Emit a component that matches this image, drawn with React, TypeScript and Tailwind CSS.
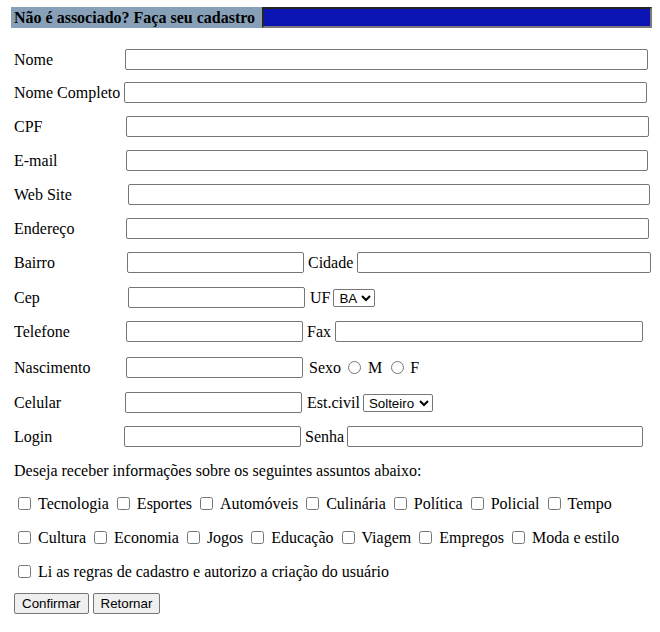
import React from "react";

const serif = "font-['Liberation_Serif','Times_New_Roman',serif]";
const sans = "font-['Liberation_Sans',Arial,sans-serif]";

const inputCls = "shrink-0 h-[21px] border border-[#767676] rounded-[2px] bg-white px-[2px] text-[13px] outline-none";

const fullRows = [
  { label: "Nome", labelW: "w-[111px]", inputW: "w-[523px]", mt: "mt-[21px]" },
  { label: "Nome Completo", labelW: "w-[110px]", inputW: "w-[523px]", mt: "mt-[12px]" },
  { label: "CPF", labelW: "w-[112px]", inputW: "w-[523px]", mt: "mt-[13px]" },
  { label: "E-mail", labelW: "w-[112px]", inputW: "w-[522px]", mt: "mt-[13px]" },
  { label: "Web Site", labelW: "w-[114px]", inputW: "w-[522px]", mt: "mt-[13px]" },
  { label: "Endereço", labelW: "w-[112px]", inputW: "w-[523px]", mt: "mt-[13px]" },
];

const topics1 = ["Tecnologia", "Esportes", "Automóveis", "Culinária", "Política", "Policial", "Tempo"];
const topics2 = ["Cultura", "Economia", "Jogos", "Educação", "Viagem", "Empregos", "Moda e estilo"];

function Check({ label }: { label: string }) {
  return (
    <label className="flex items-center shrink-0">
      <input type="checkbox" className="m-0 ml-[4px] w-[13px] h-[13px]" />
      <span className="ml-[7px] mr-[4px]">{label}</span>
    </label>
  );
}

function Select({ value, width }: { value: string; width: string }) {
  return (
    <select
      defaultValue={value}
      className={`${sans} ${width} shrink-0 h-[18px] border border-[#767676] rounded-[2px] bg-white text-[13.33px] text-black pl-[1px]`}
    >
      <option>{value}</option>
    </select>
  );
}

export default function App() {
  return (
    <div className={`${serif} text-[16px] text-black bg-white w-[660px] h-[632px] pl-[11px] pr-[4px] pt-[7px]`}>
      {/* header */}
      <div className="flex h-[21px] w-[641px]">
        <div className="w-[251px] bg-[#87a0b8] pl-[3px] font-bold leading-[21px]">Não é associado? Faça seu cadastro</div>
        <div className="flex-1 bg-[#0b15b3] border-2 border-t-[#262626] border-l-[#262626] border-r-[#7a7a7a] border-b-[#7a7a7a]" />
      </div>

      {fullRows.map((r) => (
        <div key={r.label} className={`flex items-center h-[21px] pl-[3px] ${r.mt}`}>
          <span className={`${r.labelW} shrink-0`}>{r.label}</span>
          <input type="text" className={`${inputCls} ${r.inputW}`} />
        </div>
      ))}

      {/* Bairro / Cidade */}
      <div className="flex items-center h-[21px] pl-[3px] mt-[13px]">
        <span className="w-[113px] shrink-0">Bairro</span>
        <input type="text" className={`${inputCls} w-[177px]`} />
        <span className="ml-[4px] mr-[4px]">Cidade</span>
        <input type="text" className={`${inputCls} w-[294px]`} />
      </div>

      {/* Cep / UF */}
      <div className="flex items-center h-[21px] pl-[3px] mt-[14px]">
        <span className="w-[114px] shrink-0">Cep</span>
        <input type="text" className={`${inputCls} w-[177px]`} />
        <span className="ml-[5px] mr-[3px]">UF</span>
        <Select value="BA" width="w-[42px]" />
      </div>

      {/* Telefone / Fax */}
      <div className="flex items-center h-[21px] pl-[3px] mt-[13px]">
        <span className="w-[112px] shrink-0">Telefone</span>
        <input type="text" className={`${inputCls} w-[177px]`} />
        <span className="ml-[4px] mr-[4px]">Fax</span>
        <input type="text" className={`${inputCls} w-[308px]`} />
      </div>

      {/* Nascimento / Sexo */}
      <div className="flex items-center h-[21px] pl-[3px] mt-[15px]">
        <span className="w-[112px] shrink-0">Nascimento</span>
        <input type="text" className={`${inputCls} w-[177px]`} />
        <span className="ml-[6px]">Sexo</span>
        <input type="radio" name="sexo" className="m-0 ml-[7px] w-[13px] h-[13px]" />
        <span className="ml-[7px]">M</span>
        <input type="radio" name="sexo" className="m-0 ml-[9px] w-[13px] h-[13px]" />
        <span className="ml-[6px]">F</span>
      </div>

      {/* Celular / Est.civil */}
      <div className="flex items-center h-[21px] pl-[3px] mt-[14px]">
        <span className="w-[111px] shrink-0">Celular</span>
        <input type="text" className={`${inputCls} w-[177px]`} />
        <span className="ml-[5px] mr-[3px]">Est.civil</span>
        <Select value="Solteiro" width="w-[70px]" />
      </div>

      {/* Login / Senha */}
      <div className="flex items-center h-[21px] pl-[3px] mt-[13px]">
        <span className="w-[110px] shrink-0">Login</span>
        <input type="text" className={`${inputCls} w-[177px]`} />
        <span className="ml-[4px] mr-[3px]">Senha</span>
        <input type="password" className={`${inputCls} w-[296px]`} />
      </div>

      <div className="flex items-center h-[21px] pl-[3px] mt-[13px]">
        Deseja receber informações sobre os seguintes assuntos abaixo:
      </div>

      <div className="flex items-center h-[21px] pl-[3px] mt-[12px]">
        {topics1.map((t) => (
          <Check key={t} label={t} />
        ))}
      </div>

      <div className="flex items-center h-[21px] pl-[3px] mt-[13px]">
        {topics2.map((t) => (
          <Check key={t} label={t} />
        ))}
      </div>

      <div className="flex items-center h-[21px] pl-[3px] mt-[13px]">
        <Check label="Li as regras de cadastro e autorizo a criação do usuário" />
      </div>

      <div className={`flex items-center gap-[4px] pl-[3px] mt-[11px] ${sans} text-[13.33px]`}>
        <button className="h-[21px] px-[7px] border border-[#767676] rounded-[2px] bg-[#efefef]">Confirmar</button>
        <button className="h-[21px] px-[7px] border border-[#767676] rounded-[2px] bg-[#efefef]">Retornar</button>
      </div>
    </div>
  );
}
